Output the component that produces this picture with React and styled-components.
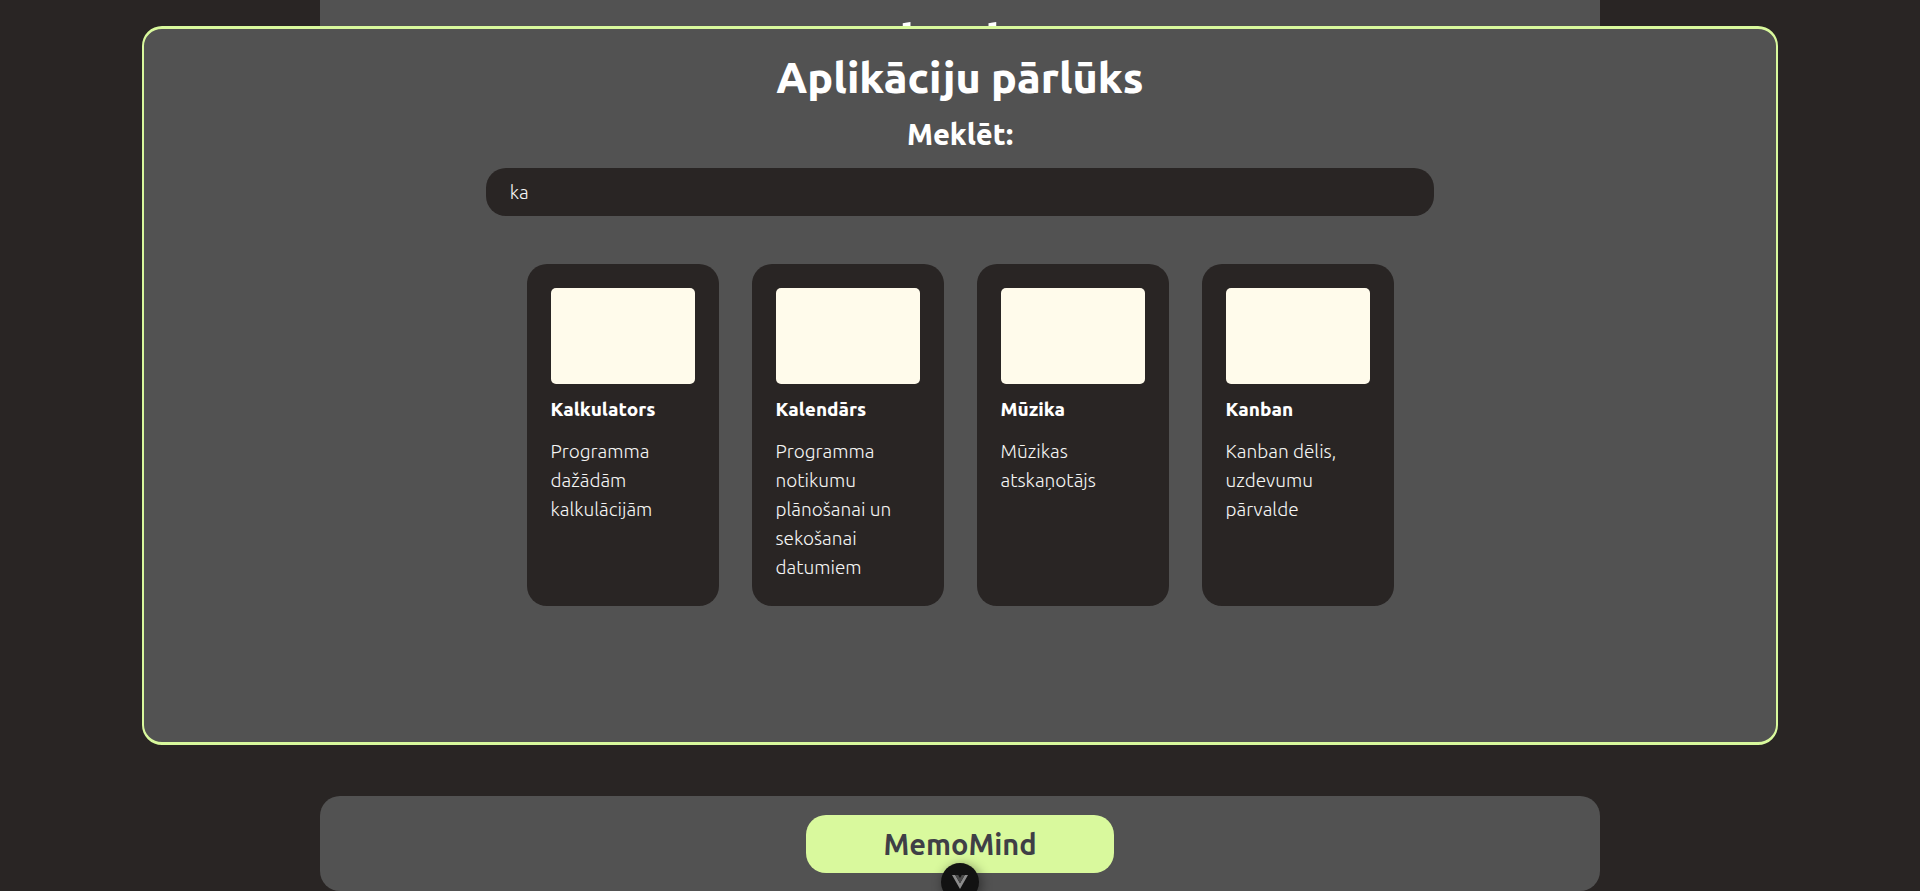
import React, { useState } from "react";
import styled, { createGlobalStyle } from "styled-components";

const GlobalStyle = createGlobalStyle`
  *, *::before, *::after { box-sizing: border-box; }
  body {
    margin: 0;
    background: #292524;
    color: #fff;
    font-family: Ubuntu, "Noto Sans", sans-serif;
  }
  h1, h2, h3, p, ul { margin: 0; padding: 0; }
  h1, h2, h3 { font-weight: 800; }
`;

const Page = styled.main`
  display: flex;
  flex-direction: column;
  align-items: center;
  gap: 80px;
  height: 100vh;
  overflow: hidden;
`;

const Panel = styled.section`
  display: flex;
  flex-direction: column;
  align-items: center;
  width: 66.667%;
  padding: 19px 24px 18px;
  background: #525252;
  border-radius: ${({ $open }) => ($open ? "0 0 20px 20px" : "20px")};
  flex: ${({ $open }) => ($open ? "1 1 0" : "0 0 auto")};
`;

const PanelHeading = styled.h2`
  font-size: 51px;
  line-height: 48px;
`;

const PanelButton = styled.button`
  width: 25%;
  height: 58px;
  border: 0;
  border-radius: 20px;
  background: #d9f99d;
  color: #3f3f46;
  font: 600 29px/36px Ubuntu, "Noto Sans", sans-serif;
`;

const Browser = styled.section`
  position: fixed;
  top: 26px;
  left: 0;
  right: 0;
  margin: 0 auto;
  width: calc(85% + 4px);
  min-height: calc(100vh - 172px);
  padding-top: 18px;
  display: flex;
  flex-direction: column;
  align-items: center;
  background: #525252;
  border: solid #d9f99d;
  border-width: 3px 2px;
  border-radius: 20px;
`;

const Title = styled.h1`
  font-size: 43px;
  line-height: 60px;
`;

const SearchLabel = styled.label`
  margin-top: 6px;
  font-size: 29px;
  font-weight: 800;
  line-height: 42px;
`;

const SearchInput = styled.input`
  width: calc(58% + 2px);
  height: 48px;
  margin-top: 13px;
  padding: 0 24px;
  border: 0;
  border-radius: 20px;
  outline: 0;
  background: #292524;
  color: #f5f5f4;
  font: 300 19px/29px Ubuntu, "Noto Sans", sans-serif;
`;

const CardList = styled.ul`
  display: flex;
  justify-content: center;
  gap: 33px;
  margin-top: 48px;
  list-style: none;
`;

const Card = styled.li`
  width: 192px;
  padding: 24px;
  border-radius: 20px;
  background: #292524;
`;

const Thumbnail = styled.div`
  height: 96px;
  border-radius: 5px;
  background: #fffbeb;
`;

const CardTitle = styled.h3`
  margin: 10px 0 13px;
  font-size: 19px;
  line-height: 30px;
`;

const CardText = styled.p`
  color: #f5f5f4;
  font-size: 19px;
  font-weight: 300;
  line-height: 29px;
`;

const Badge = styled.button`
  position: fixed;
  bottom: -10px;
  left: calc(50% - 19px);
  display: flex;
  align-items: center;
  justify-content: center;
  width: 38px;
  height: 38px;
  padding: 0;
  border: 0;
  border-radius: 50%;
  background: #121212;
  box-shadow: 2px 2px 12px rgba(0, 0, 0, 0.45);
`;

const apps = [
  { name: "Kalkulators", text: "Programma dažādām kalkulācijām" },
  { name: "Kalendārs", text: "Programma notikumu plānošanai un sekošanai datumiem" },
  { name: "Mūzika", text: "Mūzikas atskaņotājs" },
  { name: "Kanban", text: "Kanban dēlis, uzdevumu pārvalde" },
];

export default function App() {
  const [query, setQuery] = useState("ka");
  return (
    <>
      <GlobalStyle />
      <Page>
        <Panel $open>
          <PanelHeading>Labvakar!</PanelHeading>
        </Panel>
        <Panel>
          <PanelButton type="button">MemoMind</PanelButton>
        </Panel>
      </Page>
      <Browser>
        <Title>Aplikāciju pārlūks</Title>
        <SearchLabel htmlFor="app-search">Meklēt:</SearchLabel>
        <SearchInput
          id="app-search"
          type="text"
          value={query}
          onChange={(event) => setQuery(event.target.value)}
        />
        <CardList>
          {apps.map((app) => (
            <Card key={app.name}>
              <Thumbnail />
              <CardTitle>{app.name}</CardTitle>
              <CardText>{app.text}</CardText>
            </Card>
          ))}
        </CardList>
      </Browser>
      <Badge type="button" aria-label="Vue">
        <svg width="16" height="14" viewBox="0 0 16 14">
          <path d="M0 0h3.2L8 8.3 12.8 0H16L8 14z" fill="#8c8c8c" />
          <path d="M3.2 0h3L8 3.1 9.8 0h3L8 8.3z" fill="#4a4a4a" />
        </svg>
      </Badge>
    </>
  );
}
